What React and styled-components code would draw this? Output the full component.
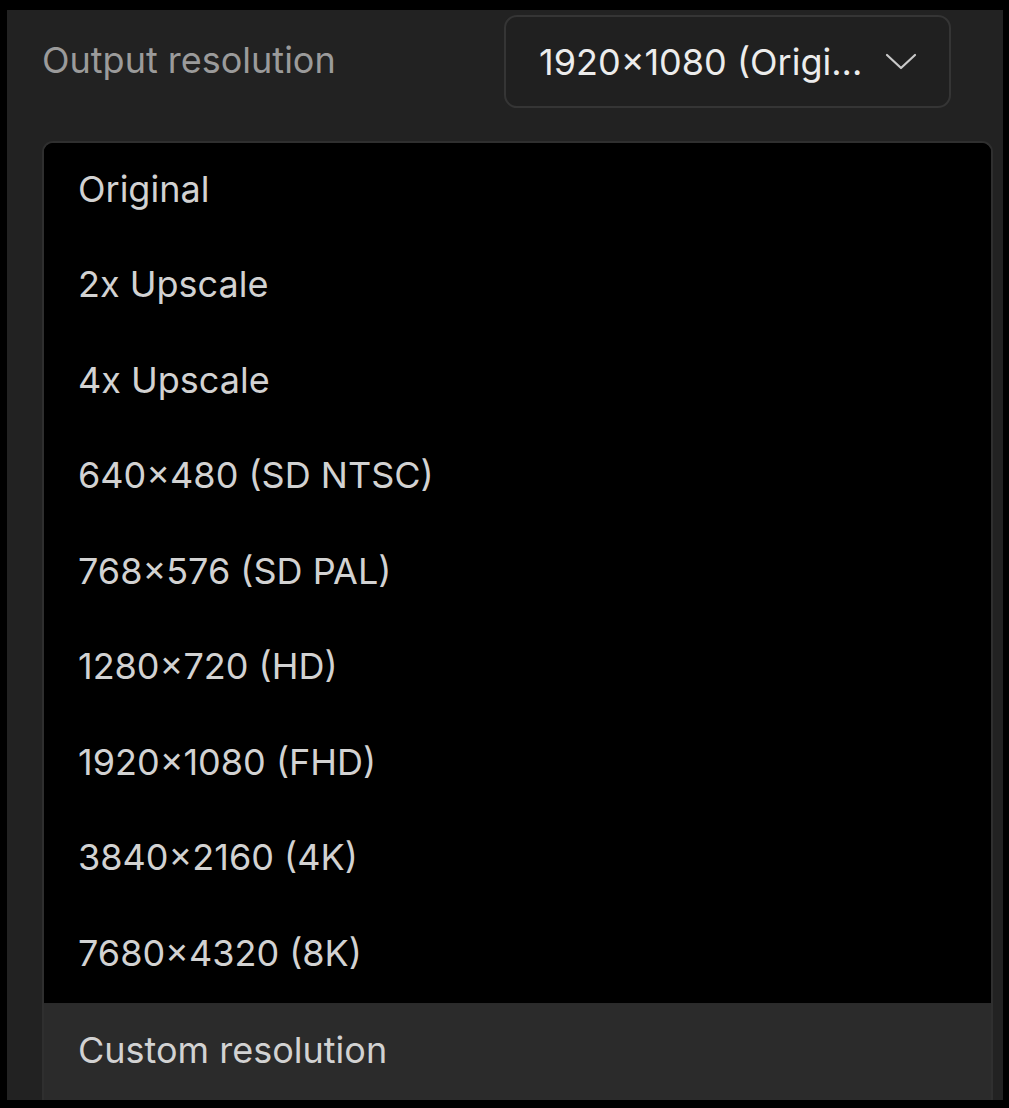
import styled, { createGlobalStyle } from "styled-components";

const GlobalStyle = createGlobalStyle`
  html, body {
    margin: 0;
    padding: 0;
    background: #000;
  }
  body {
    font-family: Inter, "Noto Sans", sans-serif;
    -webkit-font-smoothing: antialiased;
  }
`;

const options = [
  "Original",
  "2x Upscale",
  "4x Upscale",
  "640×480 (SD NTSC)",
  "768×576 (SD PAL)",
  "1280×720 (HD)",
  "1920×1080 (FHD)",
  "3840×2160 (4K)",
  "7680×4320 (8K)",
];

const Frame = styled.div`
  width: 1009px;
  height: 1108px;
  padding: 10px 6px 8px 7px;
  box-sizing: border-box;
  background: #000;
  overflow: hidden;
`;

const Panel = styled.div`
  height: 100%;
  background: #222222;
  padding: 5px 10px 0 35px;
  box-sizing: border-box;
  display: flex;
  flex-direction: column;
  overflow: hidden;
`;

const TopRow = styled.div`
  display: flex;
  align-items: center;
  justify-content: space-between;
  padding-right: 42px;
`;

const Label = styled.span`
  font-size: 36px;
  color: #9b9b9b;
  margin-top: -3px;
`;

const Trigger = styled.button`
  width: 447px;
  height: 93px;
  box-sizing: border-box;
  display: flex;
  align-items: center;
  justify-content: space-between;
  padding: 0 32px 0 33px;
  background: #202020;
  border: 2px solid #353535;
  border-radius: 13px;
  font-family: inherit;
  font-size: 36px;
  color: #ececec;
  cursor: pointer;
`;

const Chevron = styled.svg`
  width: 32px;
  height: 18px;
  flex: none;
`;

const Menu = styled.div`
  margin-top: 33px;
  flex: 1;
  border: 2px solid #2f2f2f;
  border-bottom: none;
  border-radius: 11px 11px 0 0;
  background: #000;
  display: flex;
  flex-direction: column;
  overflow: hidden;
`;

const Item = styled.div`
  height: 95.5px;
  flex: none;
  display: flex;
  align-items: center;
  padding-left: 34px;
  padding-bottom: 4px;
  box-sizing: border-box;
  font-size: 36px;
  color: #d2d2d2;
  background: ${(p) => (p.$footer ? "#2b2b2b" : "#000")};
  ${(p) => p.$footer && "flex: 1; border-top: 1px solid #2a2a2a;"}
`;

const App = () => {
  return (
    <Frame>
      <GlobalStyle />
      <Panel>
        <TopRow>
          <Label>Output resolution</Label>
          <Trigger>
            <span>1920×1080 (Origi...</span>
            <Chevron viewBox="0 0 32 18" fill="none">
              <path
                d="M2 2 L16 15 L30 2"
                stroke="#c9c9c9"
                strokeWidth="2.2"
                strokeLinecap="round"
                strokeLinejoin="round"
              />
            </Chevron>
          </Trigger>
        </TopRow>

        <Menu>
          {options.map((opt) => (
            <Item key={opt}>{opt}</Item>
          ))}
          <Item $footer>Custom resolution</Item>
        </Menu>
      </Panel>
    </Frame>
  );
};

export default App;
